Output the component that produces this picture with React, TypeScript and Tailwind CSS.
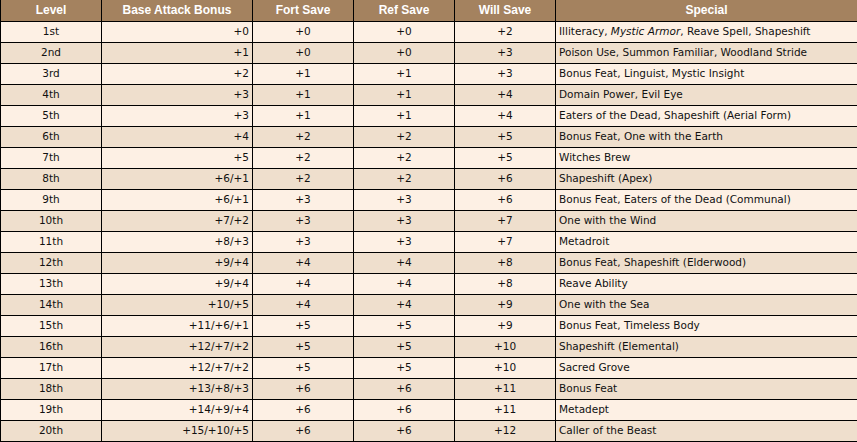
import { Fragment } from "react";

type Row = {
  level: string;
  bab: string;
  fort: string;
  ref: string;
  will: string;
  special: React.ReactNode;
};

const rows: Row[] = [
  {
    level: "1st",
    bab: "+0",
    fort: "+0",
    ref: "+0",
    will: "+2",
    special: (
      <Fragment>
        Illiteracy, <i>Mystic Armor</i>, Reave Spell, Shapeshift
      </Fragment>
    ),
  },
  { level: "2nd", bab: "+1", fort: "+0", ref: "+0", will: "+3", special: "Poison Use, Summon Familiar, Woodland Stride" },
  { level: "3rd", bab: "+2", fort: "+1", ref: "+1", will: "+3", special: "Bonus Feat, Linguist, Mystic Insight" },
  { level: "4th", bab: "+3", fort: "+1", ref: "+1", will: "+4", special: "Domain Power, Evil Eye" },
  { level: "5th", bab: "+3", fort: "+1", ref: "+1", will: "+4", special: "Eaters of the Dead, Shapeshift (Aerial Form)" },
  { level: "6th", bab: "+4", fort: "+2", ref: "+2", will: "+5", special: "Bonus Feat, One with the Earth" },
  { level: "7th", bab: "+5", fort: "+2", ref: "+2", will: "+5", special: "Witches Brew" },
  { level: "8th", bab: "+6/+1", fort: "+2", ref: "+2", will: "+6", special: "Shapeshift (Apex)" },
  { level: "9th", bab: "+6/+1", fort: "+3", ref: "+3", will: "+6", special: "Bonus Feat, Eaters of the Dead (Communal)" },
  { level: "10th", bab: "+7/+2", fort: "+3", ref: "+3", will: "+7", special: "One with the Wind" },
  { level: "11th", bab: "+8/+3", fort: "+3", ref: "+3", will: "+7", special: "Metadroit" },
  { level: "12th", bab: "+9/+4", fort: "+4", ref: "+4", will: "+8", special: "Bonus Feat, Shapeshift (Elderwood)" },
  { level: "13th", bab: "+9/+4", fort: "+4", ref: "+4", will: "+8", special: "Reave Ability" },
  { level: "14th", bab: "+10/+5", fort: "+4", ref: "+4", will: "+9", special: "One with the Sea" },
  { level: "15th", bab: "+11/+6/+1", fort: "+5", ref: "+5", will: "+9", special: "Bonus Feat, Timeless Body" },
  { level: "16th", bab: "+12/+7/+2", fort: "+5", ref: "+5", will: "+10", special: "Shapeshift (Elemental)" },
  { level: "17th", bab: "+12/+7/+2", fort: "+5", ref: "+5", will: "+10", special: "Sacred Grove" },
  { level: "18th", bab: "+13/+8/+3", fort: "+6", ref: "+6", will: "+11", special: "Bonus Feat" },
  { level: "19th", bab: "+14/+9/+4", fort: "+6", ref: "+6", will: "+11", special: "Metadept" },
  { level: "20th", bab: "+15/+10/+5", fort: "+6", ref: "+6", will: "+12", special: "Caller of the Beast" },
];

const headers = ["Level", "Base Attack Bonus", "Fort Save", "Ref Save", "Will Save", "Special"];

export default function App() {
  return (
    <div className="w-[857px] h-[442px] overflow-hidden bg-white font-['DejaVu_Sans',sans-serif] text-[10.5px] text-[#111]">
      <table className="w-[857px] table-fixed border-collapse">
        <colgroup>
          <col className="w-[101px]" />
          <col className="w-[151px]" />
          <col className="w-[101px]" />
          <col className="w-[101px]" />
          <col className="w-[101px]" />
          <col className="w-[302px]" />
        </colgroup>
        <thead>
          <tr className="h-[21px] bg-[#a4825f]">
            {headers.map((h) => (
              <th key={h} className="border-x border-b border-black p-0 text-center font-['Liberation_Sans',sans-serif] font-bold text-[12px] text-white leading-none">
                {h}
              </th>
            ))}
          </tr>
        </thead>
        <tbody>
          {rows.map((r, i) => (
            <tr key={r.level} className={i % 2 === 0 ? "h-[21px] bg-[#fdf0e4]" : "h-[21px] bg-[#efdfcd]"}>
              <td className="border border-black p-0 text-center leading-none">{r.level}</td>
              <td className="border border-black p-0 pr-[3px] text-right leading-none">{r.bab}</td>
              <td className="border border-black p-0 text-center leading-none">{r.fort}</td>
              <td className="border border-black p-0 text-center leading-none">{r.ref}</td>
              <td className="border border-black p-0 text-center leading-none">{r.will}</td>
              <td className="border border-black p-0 pl-[3px] text-left leading-none whitespace-nowrap">{r.special}</td>
            </tr>
          ))}
        </tbody>
      </table>
    </div>
  );
}
